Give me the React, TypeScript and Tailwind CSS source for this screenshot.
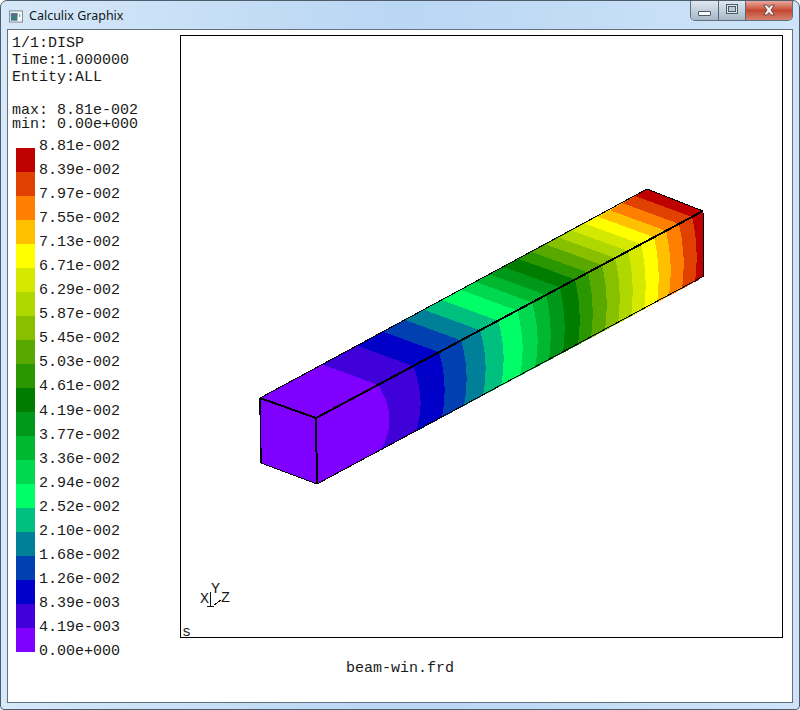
const MONO = "font-['Liberation_Mono',monospace] text-[15px] text-[#1a1a1a]";

const LABELS = ["8.81e-002","8.39e-002","7.97e-002","7.55e-002","7.13e-002","6.71e-002","6.29e-002","5.87e-002","5.45e-002","5.03e-002","4.61e-002","4.19e-002","3.77e-002","3.36e-002","2.94e-002","2.52e-002","2.10e-002","1.68e-002","1.26e-002","8.39e-003","4.19e-003","0.00e+000"];
const COLORS = ["#bf0000","#e04000","#ff8000","#ffc000","#ffff00","#d4e800","#aed800","#88c000","#58a800","#2a9600","#007c00","#009818","#00b830","#00d850","#00ff66","#00c080","#008098","#0040b0","#0000c8","#4000d8","#8000ff"];
// Where each colour change crosses the long top edge of the beam (x, in px)
const CUTS = [378,413,439,461,480,498,517,532,546,560,575,588,602,615,628,641,654,666,679,692];

const A = [260,398], B = [316,418], C = [317,484], D = [261,463], E = [703,211], F = [647,189], G = [704,276];
const ridgeY = (x: number) => B[1] + ((x - B[0]) * (E[1] - B[1])) / (E[0] - B[0]);
const bulge = (i: number) => (i === 0 ? 10 : i === 1 ? 6 : i < 8 ? 4 : 3);

function Beam() {
  const order = [...COLORS].reverse();
  return (
    <g shapeRendering="crispEdges">
      <polygon points={`${A} ${B} ${E} ${F}`} fill={order[0]} />
      <polygon points={`${B} ${C} ${G} ${E}`} fill={order[0]} />
      {CUTS.map((x, i) => {
        const y = ridgeY(x);
        return (
          <g key={x}>
            <polygon points={`${x},${y} ${E} ${F} ${x - 56},${y - 20.5}`} fill={order[i + 1]} />
            <path
              d={`M${x} ${y} Q${x + 1.5 + bulge(i) * 2} ${y + 32} ${x + 3} ${y + 65.5} L${G} L${E} Z`}
              fill={order[i + 1]}
            />
          </g>
        );
      })}
      <polygon points={`${A} ${B} ${C} ${D}`} fill="#8000ff" />
      <polygon points={`${A} ${F} ${E} ${G} ${C} ${D}`} fill="none" stroke="#000" strokeWidth="1" />
      <g stroke="#000" strokeWidth="2" fill="none">
        <line x1={A[0]} y1={A[1]} x2={B[0]} y2={B[1]} />
        <line x1={B[0]} y1={B[1]} x2={E[0]} y2={E[1]} />
        <line x1={B[0]} y1={B[1]} x2={C[0]} y2={C[1]} />
      </g>
      <line x1={A[0]} y1={A[1]} x2={D[0]} y2={D[1]} stroke="#000" strokeWidth="1.5" />
    </g>
  );
}

function Triad() {
  return (
    <g fontFamily="'Liberation Mono', monospace" fontSize="15" fill="#1a1a1a">
      <g stroke="#111" strokeWidth="1" shapeRendering="crispEdges">
        <line x1="210.5" y1="592" x2="210.5" y2="606" />
        <line x1="207" y1="606" x2="214" y2="606" />
        <line x1="214" y1="605" x2="221" y2="600" />
      </g>
      <text x="200" y="603">X</text>
      <text x="211" y="593">Y</text>
      <text x="221" y="602">Z</text>
      <text x="182" y="636">s</text>
    </g>
  );
}

function TitleButtons() {
  return (
    <div className="flex h-[20px] w-[103px] shrink-0 overflow-hidden rounded-b-[5px] border border-t-0 border-[#5f6f80]">
      <div className="flex w-[28px] items-center justify-center border-r border-[#56687a] bg-linear-to-b from-[#dfe7ef] via-[#c3d0dc] to-[#a7b7c6]">
        <div className="mt-[5px] h-[5px] w-[13px] rounded-[1px] border border-[#4c5a68] bg-white" />
      </div>
      <div className="flex w-[27px] items-center justify-center border-r border-[#56687a] bg-linear-to-b from-[#dfe7ef] via-[#c3d0dc] to-[#a7b7c6]">
        <div className="mb-[3px] h-[10px] w-[12px] border border-[#4c5a68] bg-[#dfe8f0] p-[1px]">
          <div className="h-full w-full border border-[#4c5a68] bg-[#b8c8d6]" />
        </div>
      </div>
      <div className="flex flex-1 items-center justify-center bg-linear-to-b from-[#e9a89d] via-[#c4472f] to-[#d5826f]">
        <svg width="16" height="12" viewBox="0 0 14 11" className="mb-[2px]">
          <path d="M2 1 H5 L7 3.2 L9 1 H12 L8.8 5.5 L12 10 H9 L7 7.8 L5 10 H2 L5.2 5.5 Z" fill="#f4f4f4" stroke="#5a3a36" strokeWidth="0.8" />
        </svg>
      </div>
    </div>
  );
}

function AppIcon() {
  return (
    <svg width="14" height="13" viewBox="0 0 15 13" className="shrink-0">
      <rect x="0.5" y="0.5" width="14" height="12" fill="#eef3f7" stroke="#7b8790" />
      <rect x="2" y="3" width="7" height="8" fill="#3f7d83" />
      <rect x="2" y="3" width="7" height="3" fill="#5a6f8c" />
      <rect x="10" y="3" width="3" height="8" fill="#ffffff" />
      <rect x="11" y="4" width="1" height="3" fill="#3a8a5a" />
    </svg>
  );
}

export default function App() {
  return (
    <div className="flex h-[710px] w-[800px] flex-col overflow-hidden rounded-t-[7px] rounded-b-[4px] border border-[#4e5d6c] bg-linear-to-r from-[#d6e8f9] via-[#b9d6f3] to-[#cfe4f9] px-[6px] pb-[6px]">
      <div className="flex h-[28px] shrink-0 items-start justify-between">
        <div className="flex items-center gap-[6px] pt-[7px] pl-[2px]">
          <AppIcon />
          <span className="font-['Noto_Sans',sans-serif] text-[12.5px] leading-[16px] text-[#101820]">Calculix Graphix</span>
        </div>
        <TitleButtons />
      </div>
      <div className="flex min-h-0 flex-1 flex-col border border-[#62727f] bg-white">
        <div className="flex h-[628px] shrink-0">
          <div className={`w-[172px] shrink-0 pt-[5px] pl-[4px] ${MONO}`}>
            <div className="h-[17px] leading-[17px]">1/1:DISP</div>
            <div className="h-[17px] leading-[17px]">Time:1.000000</div>
            <div className="h-[17px] leading-[17px]">Entity:ALL</div>
            <div className="mt-[17px] h-[15px] leading-[15px]">max: 8.81e-002</div>
            <div className="h-[14px] leading-[14px]">min: 0.00e+000</div>
            <div className="mt-[2px] flex">
              <div className="mt-[14px] ml-[4px] flex w-[19px] flex-col">
                {COLORS.map((c) => (
                  <div key={c} className="h-[24px]" style={{ backgroundColor: c }} />
                ))}
              </div>
              <div className="mt-[1px] ml-[4px] flex flex-col">
                {LABELS.map((l, i) => (
                  <div key={i} className="h-[24.05px] leading-[24px]">{l}</div>
                ))}
              </div>
            </div>
          </div>
          <div className="mt-[5px] h-[603px] w-[603px] shrink-0 border border-black">
            <svg width="601" height="601" viewBox="181 36 601 601" className="block overflow-visible">
              <Beam />
              <Triad />
            </svg>
          </div>
        </div>
        <div className={`mt-[3px] text-center leading-[16px] ${MONO}`}>beam-win.frd</div>
      </div>
    </div>
  );
}
